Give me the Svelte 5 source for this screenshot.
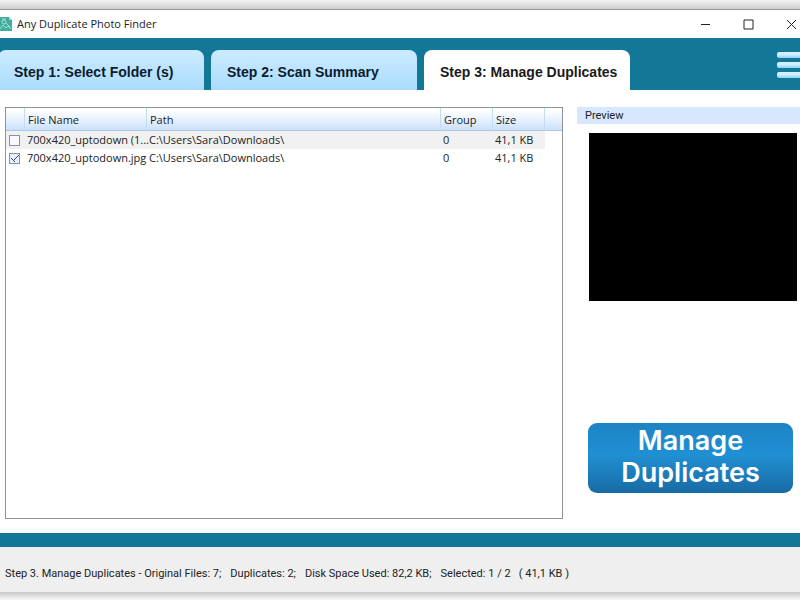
<script>
  const tabs = ['Step 1: Select Folder (s)', 'Step 2: Scan Summary', 'Step 3: Manage Duplicates'];
  let active = $state(2);
  let files = $state([
    { name: '700x420_uptodown (1).jpg', label: '700x420_uptodown (1...', path: 'C:\\Users\\Sara\\Downloads\\', group: 0, size: '41,1 KB', selected: false },
    { name: '700x420_uptodown.jpg', label: '700x420_uptodown.jpg', path: 'C:\\Users\\Sara\\Downloads\\', group: 0, size: '41,1 KB', selected: true }
  ]);
  const chosen = $derived(files.filter((f) => f.selected).length);
</script>

<div class="window">
  <header class="titlebar">
    <svg class="logo" width="13" height="14" viewBox="0 0 13 14" aria-hidden="true">
      <path d="M0 0h9l3 3v11H0z" fill="#3fae9f" />
      <path d="M9 0v3h3z" fill="#a5ddd4" />
      <circle cx="4" cy="5" r="2" fill="none" stroke="#a5ddd4" />
      <path d="M0 12l3-4 3 3 2-2 3 3M6 6l4 4M2 2h4" fill="none" stroke="#a5ddd4" />
    </svg>
    <h1>Any Duplicate Photo Finder</h1>
    <div class="controls">
      <button aria-label="Minimize"><svg width="11" height="11" viewBox="0 0 11 11"><path d="M1 5.5h9" /></svg></button>
      <button aria-label="Maximize"><svg width="11" height="11" viewBox="0 0 11 11"><path d="M1 1h9v9h-9z" /></svg></button>
      <button aria-label="Close"><svg width="11" height="11" viewBox="0 0 11 11"><path d="M1 1l9 9M10 1l-9 9" /></svg></button>
    </div>
  </header>

  <nav class="steps">
    {#each tabs as tab, i}
      <button class="tab" class:active={i === active} onclick={() => (active = i)}>{tab}</button>
    {/each}
    <button class="menu" aria-label="Menu"><i></i><i></i><i></i></button>
  </nav>

  <main>
    <section class="list">
      <table>
        <colgroup>
          <col class="c-check" /><col class="c-name" /><col /><col class="c-group" /><col class="c-size" /><col class="c-rest" />
        </colgroup>
        <thead>
          <tr><th></th><th>File Name</th><th>Path</th><th>Group</th><th>Size</th><th></th></tr>
        </thead>
        <tbody>
          {#each files as file}
            <tr>
              <td class="check"><input type="checkbox" bind:checked={file.selected} aria-label={file.name} /></td>
              <td>{file.label}</td>
              <td>{file.path}</td>
              <td>{file.group}</td>
              <td>{file.size}</td>
              <td class="rest"></td>
            </tr>
          {/each}
        </tbody>
      </table>
    </section>

    <aside>
      <h2>Preview</h2>
      <div class="preview"></div>
      <button class="manage">Manage Duplicates</button>
    </aside>
  </main>

  <footer>
    <span>Step 3. Manage Duplicates - Original Files: 7;</span>
    <span>Duplicates: 2;</span>
    <span>Disk Space Used: 82,2 KB;</span>
    <span>Selected: {chosen} / {files.length} &nbsp; ( 41,1 KB )</span>
  </footer>
  <div class="edge"></div>
</div>

<style>
  :global(body) {
    margin: 0;
    background: #fff;
  }
  .window {
    box-sizing: border-box;
    display: flex;
    flex-direction: column;
    min-height: 100vh;
    overflow: hidden;
    color: #222;
    font: 11px/18px "Open Sans", sans-serif;
  }
  .window::before {
    content: "";
    height: 9px;
    background: linear-gradient(#f4f4f4, #ccc);
  }
  button {
    padding: 0;
    border: 0;
    background: none;
    color: inherit;
    font: inherit;
  }
  h1,
  h2 {
    margin: 0;
    font: inherit;
  }
  .titlebar {
    display: flex;
    align-items: center;
    height: 28px;
    border-top: 1px solid #999;
    background: #fff;
  }
  .logo {
    margin-right: 4px;
  }
  .controls {
    display: flex;
    gap: 32px;
    margin-left: auto;
    margin-right: 3px;
  }
  .controls button {
    display: flex;
  }
  .controls path {
    fill: none;
    stroke: #222;
  }
  .steps {
    display: flex;
    align-items: flex-end;
    gap: 7px;
    height: 52px;
    background: #137797;
  }
  .tab {
    box-sizing: border-box;
    flex: none;
    width: 206px;
    height: 40px;
    padding: 4px 0 0 16px;
    border-radius: 8px 8px 0 0;
    background: linear-gradient(#cdebff, #aadcff);
    color: #0c1c2c;
    font: bold 14px/20px "Liberation Sans", Arial, sans-serif;
    text-align: left;
    white-space: nowrap;
  }
  .tab:first-child {
    margin-left: -2px;
  }
  .tab.active {
    background: #fff;
    color: #1a1a1a;
  }
  .menu {
    display: flex;
    flex-direction: column;
    gap: 4px;
    width: 23px;
    margin: 0 0 12px auto;
  }
  .menu i {
    height: 6px;
    border-radius: 2px 0 0 2px;
    background: linear-gradient(#d4f0ff 40%, #8fd0f8);
  }
  main {
    display: flex;
    flex: 1;
    gap: 14px;
    padding: 17px 0 14px 5px;
  }
  .list {
    flex: 1;
    border: 1px solid #8e9399;
    background: #fff;
  }
  table {
    width: 100%;
    border-collapse: separate;
    border-spacing: 0;
    table-layout: fixed;
  }
  .c-check {
    width: 19px;
  }
  .c-name {
    width: 122px;
  }
  .c-group,
  .c-size {
    width: 52px;
  }
  .c-rest {
    width: 17px;
  }
  th {
    height: 21px;
    padding: 1px 0 0 3px;
    border-right: 1px solid #c3dcf3;
    border-bottom: 1px solid #a8c8ec;
    background: linear-gradient(#fff 10%, #e6f1fe 55%, #cae0fa);
    font-weight: normal;
    text-align: left;
  }
  th:last-child {
    border-right: 0;
  }
  td {
    height: 18px;
    padding: 0 0 0 2px;
    white-space: nowrap;
  }
  tbody tr:first-child td:not(.rest) {
    background: #f1f1f1;
  }
  .check {
    padding-left: 3px;
    line-height: 0;
  }
  input {
    box-sizing: border-box;
    width: 11px;
    height: 11px;
    margin: 0;
    border: 1px solid #8292ac;
    background: #f7f9fd;
    appearance: none;
  }
  input:checked {
    background:
      linear-gradient(45deg, transparent 45%, #33476e 45% 60%, transparent 60%) 1px 4px / 4px 4px no-repeat,
      linear-gradient(-45deg, transparent 42%, #33476e 42% 58%, transparent 58%) 3px 1px / 6px 6px no-repeat,
      #e9effa;
  }
  aside {
    display: flex;
    flex-direction: column;
    width: 223px;
  }
  h2 {
    padding-left: 8px;
    background: #d8e7fd;
    font: 11px/17px Roboto, sans-serif;
  }
  .preview {
    height: 168px;
    margin: 9px 3px 0 12px;
    background: #000;
  }
  .manage {
    height: 70px;
    margin: auto 7px 26px 11px;
    padding: 0 16px 2px;
    border-radius: 9px;
    background: linear-gradient(#1c83c4, #2090d4 45%, #186ba4);
    color: #fff;
    font: 600 27px/32px Inter, sans-serif;
  }
  footer {
    display: flex;
    align-items: center;
    gap: 9px;
    height: 45px;
    padding: 0 5px;
    border-top: 14px solid #137797;
    background: #efefef;
    font: 11px/17px Roboto, sans-serif;
    white-space: nowrap;
  }
  footer span {
    padding-top: 8px;
  }
  .edge {
    height: 8px;
    background: linear-gradient(#c8c8c8, #f8f8f8);
  }
</style>
